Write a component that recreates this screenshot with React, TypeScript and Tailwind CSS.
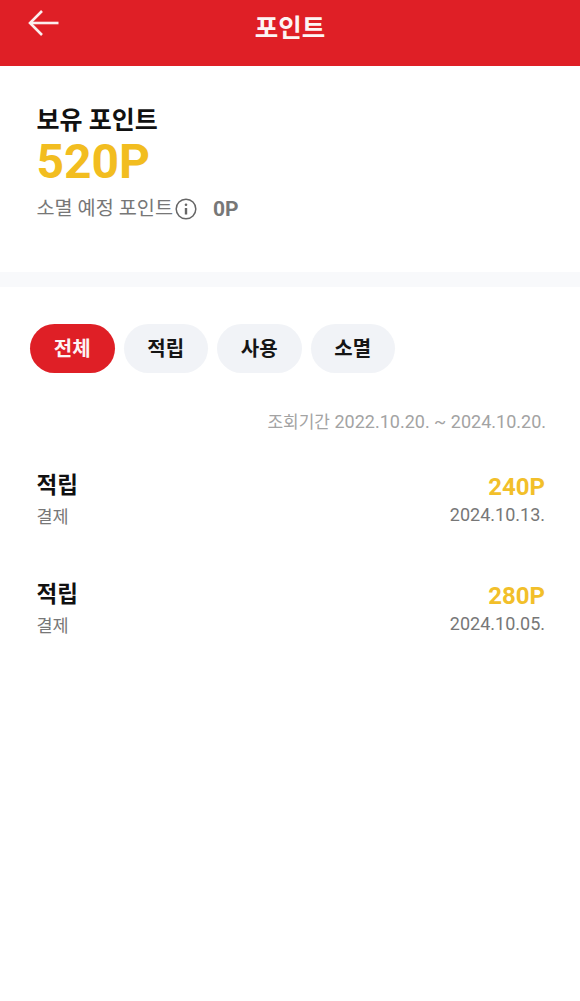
const font = '[font-family:Roboto,"Noto_Sans_CJK_KR",sans-serif]';

function Row({ amount, date }: { amount: string; date: string }) {
  return (
    <div className="flex justify-between h-[109px] pl-[36.5px] pr-[35px]">
      <div className="flex flex-col">
        <span className="text-[22.5px] leading-[30px] font-bold text-[#111]">적립</span>
        <span className="text-[17.5px] leading-[24px] mt-[5px] text-[#777]">결제</span>
      </div>
      <div className="flex flex-col items-end">
        <span className="text-[24px] leading-[30px] mt-[2px] font-bold text-[#f2bf2a]">{amount}</span>
        <span className="text-[18px] leading-[24px] mt-[1px] text-[#777]">{date}</span>
      </div>
    </div>
  );
}

export default function App() {
  const tabs = ["전체", "적립", "사용", "소멸"];
  return (
    <div className={`w-[580px] h-[1001px] bg-white overflow-hidden ${font}`}>
      <header className="relative h-[66px] bg-[#df1f26] flex justify-center">
        <svg className="absolute left-[27px] top-[9px]" width="33" height="30" viewBox="0 0 33 30" fill="none" stroke="#fbeeee" strokeWidth="2.6">
          <path d="M31.5 14H3" />
          <path d="M15 2 3 14l12 12" />
        </svg>
        <h1 className="text-[25.5px] leading-[34px] mt-[11px] font-bold text-[#fdf4f4]">포인트</h1>
      </header>

      <section className="h-[206px] pl-[36.5px] pt-[39px]">
        <div className="text-[25px] leading-[32px] font-bold text-[#111]">보유 포인트</div>
        <div className="text-[48px] leading-[52px] -mt-[1px] font-bold text-[#f2bd20]">520P</div>
        <div className="flex items-center mt-[6px] h-[30px]">
          <span className="text-[19.7px] text-[#777]">소멸 예정 포인트</span>
          <svg className="ml-[2px]" width="22" height="22" viewBox="0 0 22 22" fill="none" stroke="#666" strokeWidth="1.5">
            <circle cx="11" cy="11" r="9.8" />
            <circle cx="11" cy="6.8" r="1.3" fill="#666" stroke="none" />
            <path d="M11 10v6.5" strokeWidth="2.4" />
          </svg>
          <span className="ml-[16px] mt-[1px] text-[21px] font-bold text-[#777]">0P</span>
        </div>
      </section>

      <div className="h-[15px] bg-[#f8f9fb]" />

      <div className="flex gap-[9px] pl-[30px] mt-[37px]">
        {tabs.map((t, i) => (
          <button
            key={t}
            className={`w-[84.5px] h-[49px] rounded-full text-[20px] font-bold ${
              i === 0 ? "bg-[#df1f26] text-[#fdf4f4]" : "bg-[#f1f3f7] text-[#151515]"
            }`}
          >
            {t}
          </button>
        ))}
      </div>

      <div className="mt-[36px] pr-[34px] text-right text-[18px] leading-[26px] text-[#a3a3a3]">
        <span className="text-[17px]">조회기간</span> 2022.10.20. ~ 2024.10.20.
      </div>

      <div className="mt-[35px]">
        <Row amount="240P" date="2024.10.13." />
        <Row amount="280P" date="2024.10.05." />
      </div>
    </div>
  );
}
